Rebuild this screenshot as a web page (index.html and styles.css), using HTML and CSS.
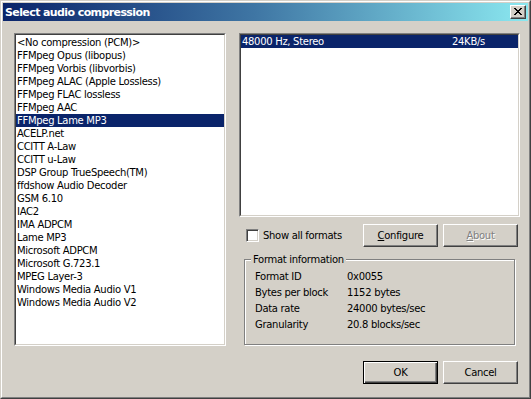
FILE: index.html
```html
<!DOCTYPE html>
<html>
<head>
<meta charset="utf-8">
<link rel="stylesheet" href="styles.css">
</head>
<body>
<div class="window">
  <div class="frame">
    <div class="titlebar">
      <span class="title">Select audio compression</span>
      <div class="close">
        <svg width="8" height="7" viewBox="0 0 8 7"><path d="M0 0h2v1h-2zM6 0h2v1h-2zM1 1h2v1h-2zM5 1h2v1h-2zM2 2h4v1h-4zM3 3h2v1h-2zM2 4h4v1h-4zM1 5h2v1h-2zM5 5h2v1h-2zM0 6h2v1h-2zM6 6h2v1h-2z" fill="#000"/></svg>
      </div>
    </div>
    <div class="client">
      <div class="main">
        <div class="listbox codecs">
          <div class="list-inner">
            <div class="item">&lt;No compression (PCM)&gt;</div>
            <div class="item">FFMpeg Opus (libopus)</div>
            <div class="item">FFMpeg Vorbis (libvorbis)</div>
            <div class="item">FFMpeg ALAC (Apple Lossless)</div>
            <div class="item">FFMpeg FLAC lossless</div>
            <div class="item">FFMpeg AAC</div>
            <div class="item sel">FFMpeg Lame MP3</div>
            <div class="item">ACELP.net</div>
            <div class="item">CCITT A-Law</div>
            <div class="item">CCITT u-Law</div>
            <div class="item">DSP Group TrueSpeech(TM)</div>
            <div class="item">ffdshow Audio Decoder</div>
            <div class="item">GSM 6.10</div>
            <div class="item">IAC2</div>
            <div class="item">IMA ADPCM</div>
            <div class="item">Lame MP3</div>
            <div class="item">Microsoft ADPCM</div>
            <div class="item">Microsoft G.723.1</div>
            <div class="item">MPEG Layer-3</div>
            <div class="item">Windows Media Audio V1</div>
            <div class="item">Windows Media Audio V2</div>
          </div>
        </div>
        <div class="side">
          <div class="listbox formats">
            <div class="list-inner">
              <div class="item sel row"><span class="fmt">48000 Hz, Stereo</span><span class="rate">24KB/s</span></div>
            </div>
          </div>
          <div class="controls">
            <label class="check"><span class="box"></span><span>Show all formats</span></label>
            <div class="buttons">
              <div class="btn"><u>C</u>onfigure</div>
              <div class="btn disabled"><u>A</u>bout</div>
            </div>
          </div>
          <div class="group">
            <span class="legend">Format information</span>
            <div class="info">
              <span>Format ID</span><span>0x0055</span>
              <span>Bytes per block</span><span>1152 bytes</span>
              <span>Data rate</span><span>24000 bytes/sec</span>
              <span>Granularity</span><span>20.8 blocks/sec</span>
            </div>
          </div>
        </div>
      </div>
      <div class="footer">
        <div class="btn default">OK</div>
        <div class="btn">Cancel</div>
      </div>
    </div>
  </div>
</div>
</body>
</html>
```

FILE: styles.css
```css
html, body {
  margin: 0;
  padding: 0;
  background: #D4D0C8;
}
body {
  font-family: "DejaVu Sans", "Liberation Sans", sans-serif;
  font-size: 10px;
  letter-spacing: -0.3px;
  color: #000;
}
.window {
  width: 531px;
  height: 399px;
  box-sizing: border-box;
  border: 1px solid;
  border-color: #D4D0C8 #404040 #404040 #D4D0C8;
  background: #D4D0C8;
}
.frame {
  height: 100%;
  box-sizing: border-box;
  border: 1px solid;
  border-color: #FFFFFF #808080 #808080 #FFFFFF;
  padding: 1px;
  display: flex;
  flex-direction: column;
}
.titlebar {
  height: 18px;
  flex: none;
  background: linear-gradient(to right, #0A246A 0%, #3f76a4 48%, #8BE8F0 100%);
  display: flex;
  align-items: center;
  justify-content: space-between;
  padding: 0 2px 0 2px;
}
.title {
  color: #fff;
  font-weight: bold;
  font-size: 11px;
  letter-spacing: -0.6px;
}
.close {
  width: 16px;
  height: 14px;
  box-sizing: border-box;
  background: #D4D0C8;
  border: 1px solid;
  border-color: #FFFFFF #404040 #404040 #FFFFFF;
  box-shadow: inset -1px -1px 0 #808080;
  display: flex;
  align-items: center;
  justify-content: center;
  padding-bottom: 1px;
}
.client {
  flex: 1;
  padding: 12px 8px 0 11px;
}
.main {
  display: flex;
  gap: 13px;
  align-items: flex-start;
}
.listbox {
  box-sizing: border-box;
  border: 1px solid;
  border-color: #808080 #FFFFFF #FFFFFF #808080;
  background: #fff;
}
.list-inner {
  height: 100%;
  box-sizing: border-box;
  border: 1px solid;
  border-color: #404040 #D4D0C8 #D4D0C8 #404040;
}
.codecs {
  width: 212px;
  height: 313px;
}
.codecs .list-inner {
  padding-top: 1px;
}
.item {
  height: 13px;
  line-height: 13px;
  padding-left: 1px;
  white-space: nowrap;
}
.item.sel {
  background: #0A246A;
  color: #fff;
}
.side {
  width: 281px;
  display: flex;
  flex-direction: column;
}
.formats {
  height: 184px;
}
.row {
  display: flex;
}
.fmt {
  width: 210px;
}
.controls {
  margin-top: 7px;
  height: 23px;
  display: flex;
  align-items: center;
  justify-content: space-between;
  padding-left: 7px;
  padding-right: 2px;
}
.check {
  display: flex;
  align-items: center;
  gap: 4px;
}
.box {
  width: 13px;
  height: 13px;
  box-sizing: border-box;
  border: 1px solid;
  border-color: #808080 #FFFFFF #FFFFFF #808080;
  box-shadow: inset 1px 1px 0 #404040, inset -1px -1px 0 #D4D0C8;
  background: #fff;
}
.buttons {
  display: flex;
  gap: 5px;
}
.btn {
  width: 75px;
  height: 23px;
  box-sizing: border-box;
  border: 1px solid;
  border-color: #FFFFFF #404040 #404040 #FFFFFF;
  box-shadow: inset -1px -1px 0 #808080;
  display: flex;
  align-items: center;
  justify-content: center;
  padding-bottom: 1px;
}
.btn.disabled {
  color: #808080;
  text-shadow: 1px 1px 0 #fff;
}
.btn.default {
  border: 1px solid #000;
  box-shadow: inset 1px 1px 0 #fff, inset -1px -1px 0 #404040, inset -2px -2px 0 #808080;
}
.group {
  position: relative;
  margin: 12px 5px 0 5px;
  height: 86px;
  box-sizing: border-box;
  border: 1px solid #808080;
  box-shadow: inset 1px 1px 0 #fff, 1px 1px 0 #fff;
  padding: 8px 0 0 10px;
}
.legend {
  position: absolute;
  left: 6px;
  top: -7px;
  padding: 0 2px;
  background: #D4D0C8;
  line-height: 13px;
}
.info {
  display: grid;
  grid-template-columns: 92px auto;
  grid-auto-rows: 16px;
  align-items: center;
}
.footer {
  margin-top: 15px;
  display: flex;
  justify-content: flex-end;
  gap: 5px;
  padding-right: 2px;
}
```
